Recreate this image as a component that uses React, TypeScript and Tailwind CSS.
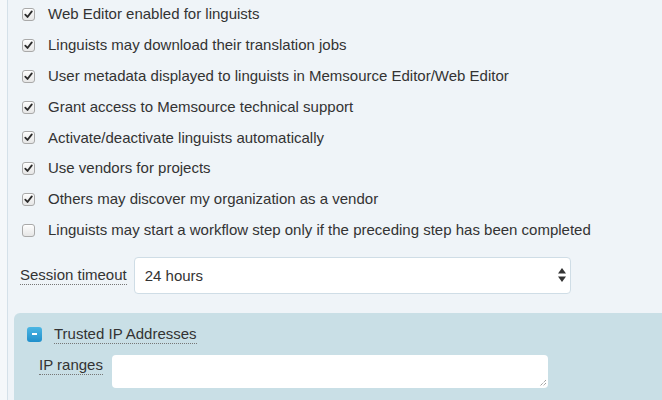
import React from "react";

const items: { label: string; checked: boolean }[] = [
  { label: "Web Editor enabled for linguists", checked: true },
  { label: "Linguists may download their translation jobs", checked: true },
  { label: "User metadata displayed to linguists in Memsource Editor/Web Editor", checked: true },
  { label: "Grant access to Memsource technical support", checked: true },
  { label: "Activate/deactivate linguists automatically", checked: true },
  { label: "Use vendors for projects", checked: true },
  { label: "Others may discover my organization as a vendor", checked: true },
  { label: "Linguists may start a workflow step only if the preceding step has been completed", checked: false },
];

function Box({ checked }: { checked: boolean }) {
  return (
    <span className="flex h-[13px] w-[13px] items-center justify-center rounded-[3px] border border-[#a9a9a9] bg-gradient-to-b from-[#fdfdfd] to-[#e6e6e6] shadow-[inset_0_1px_0_#fff]">
      {checked && (
        <svg width="9" height="9" viewBox="0 0 9 9">
          <path d="M1.3 4.6 L3.5 7 L7.8 1.4" fill="none" stroke="#2b2b2b" strokeWidth="1.8" strokeLinecap="round" strokeLinejoin="round" />
        </svg>
      )}
    </span>
  );
}

export default function App() {
  return (
    <div
      className="flex h-[400px] w-[662px] overflow-hidden bg-[#f5f8fa] text-[15px] text-[#333]"
      style={{ fontFamily: '"Liberation Sans", Arial, sans-serif' }}
    >
      <div className="w-[7px] shrink-0" />
      <div className="flex min-w-0 flex-1 flex-col border-l border-[#d5e1e9] bg-[#eff4f8]">
        <div className="mt-[-1px] flex flex-col">
          {items.map((it) => (
            <div key={it.label} className="flex h-[30.86px] items-center">
              <div className="ml-[14px] w-[26px] shrink-0">
                <Box checked={it.checked} />
              </div>
              <span className="whitespace-nowrap">{it.label}</span>
            </div>
          ))}
        </div>
        <div className="mt-[11px] flex items-center">
          <span className="ml-[12px] border-b border-dotted border-[#777] leading-[18px]">Session timeout</span>
          <div className="ml-[7px] flex h-[37px] w-[437px] items-center justify-between rounded-[4px] border border-[#cfdde6] bg-white pl-[10px] pr-[4px]">
            <span className="mt-[2px]">24 hours</span>
            <svg width="8" height="14" viewBox="0 0 8 14">
              <path d="M4 0 L8 5.5 L0 5.5 Z" fill="#333" />
              <path d="M4 14 L8 8.5 L0 8.5 Z" fill="#333" />
            </svg>
          </div>
        </div>
        <div className="ml-[6px] mt-[19px] flex-1 rounded-tl-[6px] bg-[#c9dfe6]">
          <div className="mt-[12px] flex items-center">
            <span className="ml-[13px] flex h-[15px] w-[15px] items-center justify-center rounded-[3px] bg-gradient-to-b from-[#4bb6e3] to-[#1f8fcb]">
              <span className="h-[2px] w-[5px] bg-white" />
            </span>
            <span className="ml-[12px] border-b border-dotted border-[#777] leading-[18px]">Trusted IP Addresses</span>
          </div>
          <div className="mt-[11px] flex items-start">
            <span className="ml-[25px] mt-[1px] border-b border-dotted border-[#777] leading-[18px]">IP ranges</span>
            <div className="relative ml-[9px] h-[33px] w-[436px] rounded-[4px] bg-white">
              <svg className="absolute bottom-[1px] right-[1px]" width="8" height="8" viewBox="0 0 8 8">
                <path d="M7 1 L1 7 M7 4 L4 7" stroke="#555" strokeWidth="0.8" strokeDasharray="1 1" />
              </svg>
            </div>
          </div>
        </div>
      </div>
    </div>
  );
}
